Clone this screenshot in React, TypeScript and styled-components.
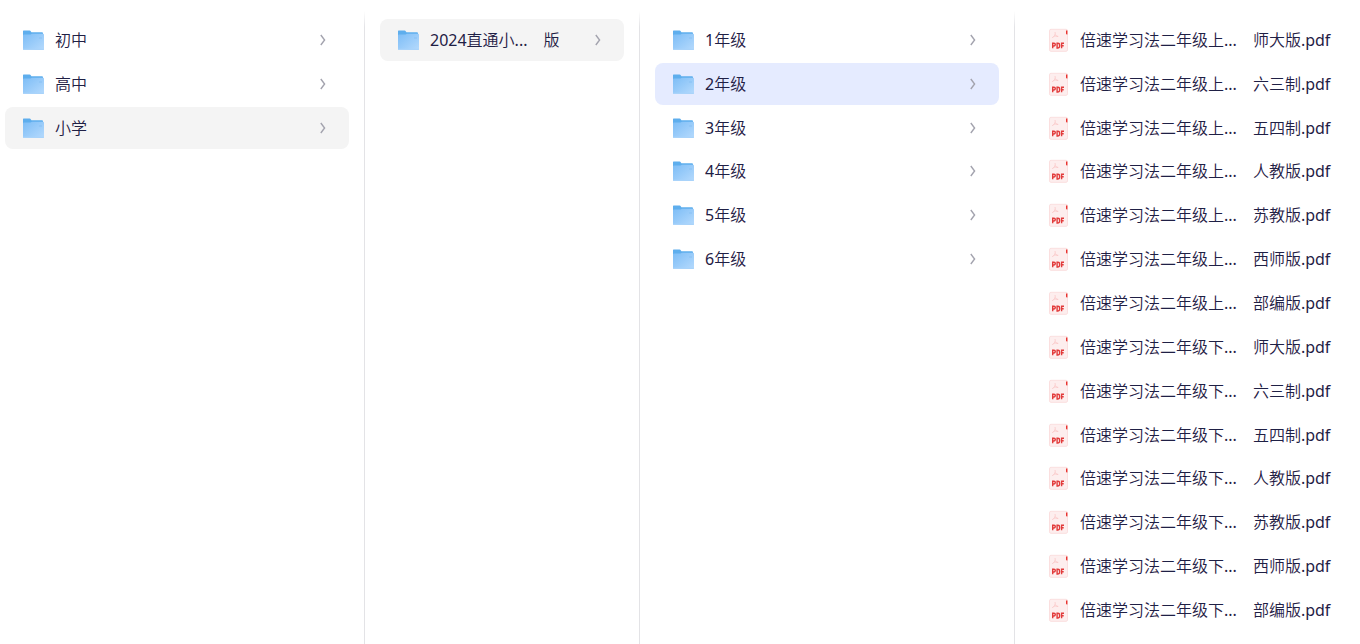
import React, { useState } from 'react';
import styled, { createGlobalStyle } from 'styled-components';

const GlobalStyle = createGlobalStyle`
  *, *::before, *::after { box-sizing: border-box; }
  body {
    margin: 0;
    background: #fff;
    color: #1f2045;
    font-family: "Noto Sans", "Noto Sans CJK SC DemiLight", "Noto Sans CJK SC Light", "Noto Sans CJK SC", sans-serif;
    font-size: 16px;
    line-height: 22px;
  }
`;

const Browser = styled.main`
  display: grid;
  grid-template-columns: 73fr 55fr 75fr 69fr;
  min-height: 100vh;
  overflow: hidden;
`;

const Pane = styled.section<{ $first?: boolean; $last?: boolean }>`
  display: flex;
  flex-direction: column;
  min-width: 0;
  padding: 19px 15px 13px ${(p) => (p.$first ? 5 : 15)}px;
  border-right: ${(p) => (p.$last ? 0 : 1)}px solid;
  border-image: linear-gradient(to bottom, transparent 12px, #e3e3e6 28px) 1;
`;

/* Fourteen equal rows share the height of the pane. */
const List = styled.ul`
  flex: 1;
  display: grid;
  grid-template-rows: repeat(14, minmax(40px, 1fr));
  row-gap: 2px;
  max-height: 640px;
  margin: 0;
  padding: 0;
  list-style: none;
`;

const Item = styled.li`
  display: flex;
  min-width: 0;
`;

type Tone = 'none' | 'path' | 'active';
const tones: Record<Tone, string> = { none: 'transparent', path: '#f4f4f4', active: '#e5ebff' };

const Row = styled.button<{ $tone: Tone; $file?: boolean }>`
  flex: 1;
  display: flex;
  align-items: center;
  gap: 10px;
  min-width: 0;
  padding: 0 ${(p) => (p.$file ? 0 : 18)}px 0 16px;
  border: 0;
  border-radius: 8px;
  background: ${(p) => tones[p.$tone]};
  color: inherit;
  font: inherit;
  text-align: left;
  cursor: pointer;
`;

const Name = styled.span`
  flex: 1;
  display: flex;
  gap: 16px;
  min-width: 0;
  white-space: nowrap;
`;

const Icon = styled.svg`
  flex: none;
  width: 24px;
  height: 24px;
`;

const Chevron = styled.svg`
  flex: none;
  width: 16px;
  height: 16px;
  fill: none;
  stroke: #a3a3ae;
  stroke-width: 1.4;
`;

const FolderIcon = () => (
  <Icon viewBox="0 0 24 24" aria-hidden="true">
    <path d="M2 3.1Q2 2.6 2.6 2.6H8.6Q9.4 2.6 9.9 3.4L10.4 4.2H21Q22 4.2 22 5.2V12H2Z" fill="#5eaeed" />
    <path d="M2 7.4Q2 6.6 3 6.6H9.5L11 5.8H22Q23 5.8 23 6.8V21.2Q23 22 22 22H3Q2 22 2 21.2Z" fill="url(#folderFront)" />
    <path d="M2 20.8H23V21.2Q23 22 22 22H3Q2 22 2 21.2Z" fill="#a9d3fa" />
    <path d="M18 10H21" stroke="#8cc3f5" strokeWidth="1.2" />
  </Icon>
);

const PdfIcon = () => (
  <Icon viewBox="0 0 24 24" aria-hidden="true">
    <rect x="3.5" y="1.3" width="18" height="22" rx="1.5" fill="#fdeeee" stroke="#fbdfdf" />
    <path d="M20 2.6H21.4V6.6H21Q20 6.6 20 5.6Z" fill="#e8322f" />
    <path
      d="M9 4C9.5 6.2 9.3 7.7 6.2 9.7M9.2 6.5C10 8 11 8.5 12.3 8.4M7.7 8.5C9 7.8 10.3 7.9 12 8.5"
      fill="none"
      stroke="#f9c8c8"
      strokeWidth="0.9"
    />
    <path
      d="M6.7 20.3V15.3H8Q9.3 15.3 9.3 16.6T8 18H6.7M11.1 15.3V20H12Q13.6 20 13.6 18.3V17Q13.6 15.3 12 15.3ZM15.6 20.3V15.3H18M15.6 17.7H17.7"
      fill="none"
      stroke="#e23b3b"
      strokeWidth="1.4"
    />
  </Icon>
);

interface EntryProps {
  name: string;
  suffix?: string;
  tone?: Tone;
  file?: boolean;
  onSelect?: () => void;
}

const Entry = ({ name, suffix, tone = 'none', file, onSelect }: EntryProps) => (
  <Item>
    <Row type="button" $tone={tone} $file={file} onClick={onSelect}>
      {file ? <PdfIcon /> : <FolderIcon />}
      <Name>
        <span>{name}</span>
        {suffix && <span>{suffix}</span>}
      </Name>
      {!file && (
        <Chevron viewBox="0 0 16 16" aria-hidden="true">
          <path d="M5.8 3L9.6 8L5.8 13" />
        </Chevron>
      )}
    </Row>
  </Item>
);

const stages = ['初中', '高中', '小学'];
const grades = ['1年级', '2年级', '3年级', '4年级', '5年级', '6年级'];
const terms = ['上', '下'];
const editions = ['师大版', '六三制', '五四制', '人教版', '苏教版', '西师版', '部编版'];

export default function App() {
  const [stage, setStage] = useState('小学');
  const [grade, setGrade] = useState('2年级');

  return (
    <>
      <GlobalStyle />
      <svg width="0" height="0" display="block" aria-hidden="true">
        <linearGradient id="folderFront" x1="0" y1="0" x2="1" y2="1">
          <stop offset="0" stopColor="#7dbdf6" />
          <stop offset="1" stopColor="#b5dafd" />
        </linearGradient>
      </svg>
      <Browser>
        <Pane $first>
          <List>
            {stages.map((s) => (
              <Entry key={s} name={s} tone={s === stage ? 'path' : 'none'} onSelect={() => setStage(s)} />
            ))}
          </List>
        </Pane>
        <Pane>
          <List>
            <Entry name="2024直通小..." suffix="版" tone="path" />
          </List>
        </Pane>
        <Pane>
          <List>
            {grades.map((g) => (
              <Entry key={g} name={g} tone={g === grade ? 'active' : 'none'} onSelect={() => setGrade(g)} />
            ))}
          </List>
        </Pane>
        <Pane $last>
          <List>
            {terms.flatMap((t) =>
              editions.map((e) => (
                <Entry key={t + e} file name={`倍速学习法二年级${t}...`} suffix={`${e}.pdf`} />
              )),
            )}
          </List>
        </Pane>
      </Browser>
    </>
  );
}
